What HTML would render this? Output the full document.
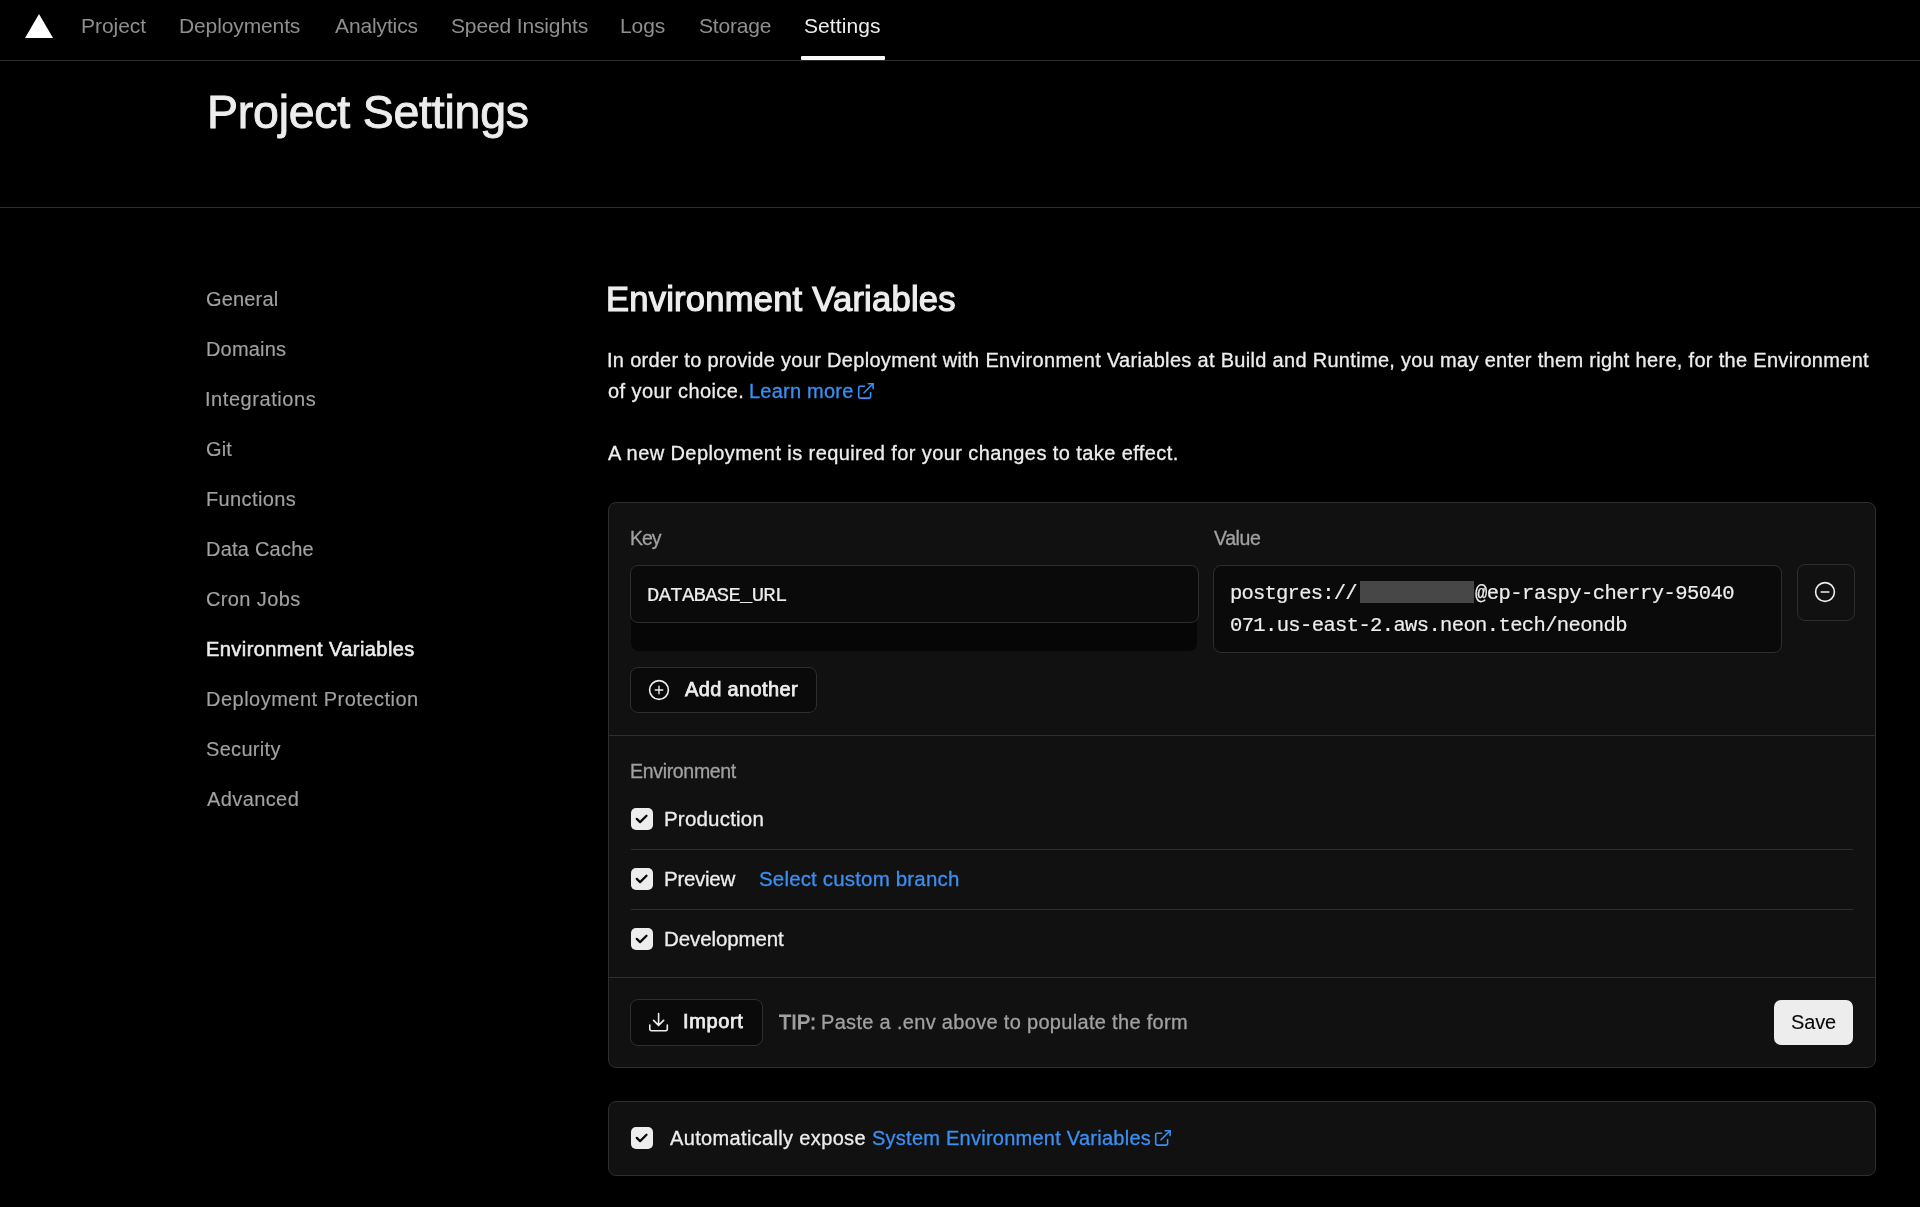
<!DOCTYPE html>
<html><head><meta charset="utf-8"><title>Project Settings</title>
<style>
html,body{margin:0;padding:0;background:#000;width:1920px;height:1207px;overflow:hidden;font-family:"Liberation Sans",sans-serif;}
.t{position:absolute;white-space:pre;will-change:transform;}
</style></head><body>
<svg style="position:absolute;left:25px;top:14px" width="28" height="24" viewBox="0 0 28 24"><path d="M14 0 L28 24 L0 24 Z" fill="#fff"/></svg>
<div class="t" style="left:81.30px;top:15.02px;font-size:21px;line-height:21px;color:#8f8f8f;font-family:'Liberation Sans',sans-serif;letter-spacing:-0.033px;">Project</div>
<div class="t" style="left:179.30px;top:15.02px;font-size:21px;line-height:21px;color:#8f8f8f;font-family:'Liberation Sans',sans-serif;letter-spacing:-0.120px;">Deployments</div>
<div class="t" style="left:335.00px;top:15.02px;font-size:21px;line-height:21px;color:#8f8f8f;font-family:'Liberation Sans',sans-serif;letter-spacing:-0.125px;">Analytics</div>
<div class="t" style="left:451.00px;top:15.02px;font-size:21px;line-height:21px;color:#8f8f8f;font-family:'Liberation Sans',sans-serif;letter-spacing:-0.138px;">Speed Insights</div>
<div class="t" style="left:620.00px;top:15.02px;font-size:21px;line-height:21px;color:#8f8f8f;font-family:'Liberation Sans',sans-serif;letter-spacing:-0.067px;">Logs</div>
<div class="t" style="left:699.00px;top:15.02px;font-size:21px;line-height:21px;color:#8f8f8f;font-family:'Liberation Sans',sans-serif;letter-spacing:-0.167px;">Storage</div>
<div class="t" style="left:804.40px;top:15.02px;font-size:21px;line-height:21px;color:#ededed;font-family:'Liberation Sans',sans-serif;letter-spacing:0.086px;">Settings</div>
<div style="position:absolute;left:0px;top:60px;width:1920px;height:1px;box-sizing:border-box;background:#2e2e2e"></div>
<div style="position:absolute;left:801px;top:56.4px;width:84px;height:3.4px;box-sizing:border-box;background:#fafafa;border-radius:1px"></div>
<div class="t" style="left:206.60px;top:88.54px;font-size:46.5px;line-height:46.5px;color:#ededed;font-family:'Liberation Sans',sans-serif;letter-spacing:-0.240px;-webkit-text-stroke:0.9px currentColor;">Project Settings</div>
<div style="position:absolute;left:0px;top:207px;width:1920px;height:1px;box-sizing:border-box;background:#2e2e2e"></div>
<div class="t" style="left:206.20px;top:289.37px;font-size:20px;line-height:20px;color:#a1a1a1;font-family:'Liberation Sans',sans-serif;letter-spacing:0.167px;-webkit-text-stroke:0.15px currentColor;">General</div>
<div class="t" style="left:206.20px;top:339.37px;font-size:20px;line-height:20px;color:#a1a1a1;font-family:'Liberation Sans',sans-serif;letter-spacing:0.167px;-webkit-text-stroke:0.15px currentColor;">Domains</div>
<div class="t" style="left:205.20px;top:389.37px;font-size:20px;line-height:20px;color:#a1a1a1;font-family:'Liberation Sans',sans-serif;letter-spacing:0.564px;-webkit-text-stroke:0.15px currentColor;">Integrations</div>
<div class="t" style="left:206.20px;top:439.37px;font-size:20px;line-height:20px;color:#a1a1a1;font-family:'Liberation Sans',sans-serif;letter-spacing:0.100px;-webkit-text-stroke:0.15px currentColor;">Git</div>
<div class="t" style="left:206.20px;top:489.37px;font-size:20px;line-height:20px;color:#a1a1a1;font-family:'Liberation Sans',sans-serif;letter-spacing:0.375px;-webkit-text-stroke:0.15px currentColor;">Functions</div>
<div class="t" style="left:206.20px;top:539.37px;font-size:20px;line-height:20px;color:#a1a1a1;font-family:'Liberation Sans',sans-serif;letter-spacing:0.222px;-webkit-text-stroke:0.15px currentColor;">Data Cache</div>
<div class="t" style="left:206.20px;top:589.37px;font-size:20px;line-height:20px;color:#a1a1a1;font-family:'Liberation Sans',sans-serif;letter-spacing:0.375px;-webkit-text-stroke:0.15px currentColor;">Cron Jobs</div>
<div class="t" style="left:206.20px;top:639.37px;font-size:20px;line-height:20px;color:#ededed;font-family:'Liberation Sans',sans-serif;letter-spacing:0.430px;-webkit-text-stroke:0.55px currentColor;">Environment Variables</div>
<div class="t" style="left:206.20px;top:689.37px;font-size:20px;line-height:20px;color:#a1a1a1;font-family:'Liberation Sans',sans-serif;letter-spacing:0.490px;-webkit-text-stroke:0.15px currentColor;">Deployment Protection</div>
<div class="t" style="left:206.20px;top:739.37px;font-size:20px;line-height:20px;color:#a1a1a1;font-family:'Liberation Sans',sans-serif;letter-spacing:0.314px;-webkit-text-stroke:0.15px currentColor;">Security</div>
<div class="t" style="left:207.20px;top:789.37px;font-size:20px;line-height:20px;color:#a1a1a1;font-family:'Liberation Sans',sans-serif;letter-spacing:0.400px;-webkit-text-stroke:0.15px currentColor;">Advanced</div>
<div class="t" style="left:605.90px;top:282.11px;font-size:34.6px;line-height:34.6px;color:#ededed;font-family:'Liberation Sans',sans-serif;letter-spacing:0.210px;-webkit-text-stroke:1.2px currentColor;">Environment Variables</div>
<div class="t" style="left:606.90px;top:349.57px;font-size:20px;line-height:20px;color:#ededed;font-family:'Liberation Sans',sans-serif;letter-spacing:0.309px;-webkit-text-stroke:0.3px currentColor;">In order to provide your Deployment with Environment Variables at Build and Runtime, you may enter them right here, for the Environment</div>
<div class="t" style="left:607.90px;top:381.17px;font-size:20px;line-height:20px;color:#ededed;font-family:'Liberation Sans',sans-serif;letter-spacing:0.414px;-webkit-text-stroke:0.3px currentColor;">of your choice.</div>
<div class="t" style="left:748.80px;top:381.17px;font-size:20px;line-height:20px;color:#3b8ff2;font-family:'Liberation Sans',sans-serif;letter-spacing:0.222px;-webkit-text-stroke:0.3px currentColor;">Learn more</div>
<svg style="position:absolute;left:856px;top:382px" width="19" height="18" viewBox="0 0 19 18" fill="none" stroke="#3b8ff2" stroke-width="1.6" stroke-linecap="round" stroke-linejoin="round"><path d="M8.5 4.2H4.2a1.5 1.5 0 0 0-1.5 1.5v8.9a1.5 1.5 0 0 0 1.5 1.5h8.9a1.5 1.5 0 0 0 1.5-1.5V10.5"/><path d="M12.3 1.8h4.8v4.8"/><path d="M8 10.8L17 1.8"/></svg>
<div class="t" style="left:607.90px;top:443.17px;font-size:20px;line-height:20px;color:#ededed;font-family:'Liberation Sans',sans-serif;letter-spacing:0.413px;-webkit-text-stroke:0.3px currentColor;">A new Deployment is required for your changes to take effect.</div>
<div style="position:absolute;left:608px;top:502px;width:1268px;height:566px;box-sizing:border-box;background:#111111;border:1px solid #2e2e2e;border-radius:8px"></div>
<div style="position:absolute;left:609px;top:735px;width:1266px;height:1px;box-sizing:border-box;background:#2e2e2e"></div>
<div style="position:absolute;left:609px;top:977px;width:1266px;height:1px;box-sizing:border-box;background:#2e2e2e"></div>
<div class="t" style="left:630.25px;top:528.99px;font-size:19.5px;line-height:19.5px;color:#a1a1a1;font-family:'Liberation Sans',sans-serif;letter-spacing:-1.000px;-webkit-text-stroke:0.3px currentColor;">Key</div>
<div class="t" style="left:1213.90px;top:528.99px;font-size:19.5px;line-height:19.5px;color:#a1a1a1;font-family:'Liberation Sans',sans-serif;letter-spacing:-0.400px;-webkit-text-stroke:0.3px currentColor;">Value</div>
<div style="position:absolute;left:631px;top:565px;width:566px;height:86px;box-sizing:border-box;background:#060606;border-radius:8px"></div>
<div style="position:absolute;left:630px;top:565px;width:569px;height:58px;box-sizing:border-box;background:#0a0a0a;border:1px solid #2e2e2e;border-radius:8px"></div>
<div class="t" style="left:646.80px;top:585.89px;font-size:20.5px;line-height:20.5px;color:#ededed;font-family:'Liberation Mono',monospace;letter-spacing:-0.673px;-webkit-text-stroke:0.2px currentColor;">DATABASE_URL</div>
<div style="position:absolute;left:1213px;top:565px;width:569px;height:88px;box-sizing:border-box;background:#0a0a0a;border:1px solid #2e2e2e;border-radius:8px"></div>
<div class="t" style="left:1230.20px;top:584.19px;font-size:20.5px;line-height:20.5px;color:#ededed;font-family:'Liberation Mono',monospace;letter-spacing:-0.780px;-webkit-text-stroke:0.2px currentColor;">postgres://</div>
<div style="position:absolute;left:1360px;top:581px;width:114px;height:22px;box-sizing:border-box;background:#474747"></div>
<div class="t" style="left:1474.50px;top:584.19px;font-size:20.5px;line-height:20.5px;color:#ededed;font-family:'Liberation Mono',monospace;letter-spacing:-0.524px;-webkit-text-stroke:0.2px currentColor;">@ep-raspy-cherry-95040</div>
<div class="t" style="left:1230.20px;top:615.99px;font-size:20.5px;line-height:20.5px;color:#ededed;font-family:'Liberation Mono',monospace;letter-spacing:-0.630px;-webkit-text-stroke:0.2px currentColor;">071.us-east-2.aws.neon.tech/neondb</div>
<div style="position:absolute;left:1796.5px;top:563.5px;width:58px;height:57.5px;box-sizing:border-box;background:#111111;border:1px solid #2e2e2e;border-radius:8px"></div>
<svg style="position:absolute;left:1813.2px;top:579.8px" width="24" height="24" viewBox="0 0 24 24" fill="none" stroke="#ededed" stroke-linecap="round"><circle cx="12" cy="12" r="9.4" stroke-width="1.6"/><path d="M8.2 12h7.6" stroke-width="1.6"/></svg>
<div style="position:absolute;left:630px;top:667px;width:187px;height:46px;box-sizing:border-box;background:#0a0a0a;border:1px solid #2e2e2e;border-radius:8px"></div>
<svg style="position:absolute;left:646.6px;top:678.3px" width="24" height="24" viewBox="0 0 24 24" fill="none" stroke="#ededed" stroke-linecap="round"><circle cx="12" cy="12" r="9.4" stroke-width="1.6"/><path d="M8.2 12h7.6M12 8.2v7.6" stroke-width="1.4"/></svg>
<div class="t" style="left:684.75px;top:679.17px;font-size:20px;line-height:20px;color:#ededed;font-family:'Liberation Sans',sans-serif;letter-spacing:0.360px;-webkit-text-stroke:0.75px currentColor;">Add another</div>
<div class="t" style="left:630.25px;top:761.74px;font-size:19.5px;line-height:19.5px;color:#a1a1a1;font-family:'Liberation Sans',sans-serif;letter-spacing:-0.320px;-webkit-text-stroke:0.3px currentColor;">Environment</div>
<div style="position:absolute;left:631px;top:808px;width:22px;height:22px;background:#ededed;border-radius:5px"></div><svg style="position:absolute;left:631px;top:808px" width="22" height="22" viewBox="0 0 22 22" fill="none" stroke="#0a0a0a" stroke-width="2.3" stroke-linecap="round" stroke-linejoin="round"><path d="M5.8 10.9L9.1 14.1L15.5 7.7"/></svg>
<div class="t" style="left:663.80px;top:809.05px;font-size:20.5px;line-height:20.5px;color:#ededed;font-family:'Liberation Sans',sans-serif;letter-spacing:0.200px;-webkit-text-stroke:0.3px currentColor;">Production</div>
<div style="position:absolute;left:631px;top:849px;width:1222px;height:1px;box-sizing:border-box;background:#2e2e2e"></div>
<div style="position:absolute;left:631px;top:868px;width:22px;height:22px;background:#ededed;border-radius:5px"></div><svg style="position:absolute;left:631px;top:868px" width="22" height="22" viewBox="0 0 22 22" fill="none" stroke="#0a0a0a" stroke-width="2.3" stroke-linecap="round" stroke-linejoin="round"><path d="M5.8 10.9L9.1 14.1L15.5 7.7"/></svg>
<div class="t" style="left:663.70px;top:869.15px;font-size:20.5px;line-height:20.5px;color:#ededed;font-family:'Liberation Sans',sans-serif;letter-spacing:-0.267px;-webkit-text-stroke:0.3px currentColor;">Preview</div>
<div class="t" style="left:759.00px;top:869.15px;font-size:20.5px;line-height:20.5px;color:#3b8ff2;font-family:'Liberation Sans',sans-serif;letter-spacing:0.168px;-webkit-text-stroke:0.3px currentColor;">Select custom branch</div>
<div style="position:absolute;left:631px;top:909px;width:1222px;height:1px;box-sizing:border-box;background:#2e2e2e"></div>
<div style="position:absolute;left:631px;top:928px;width:22px;height:22px;background:#ededed;border-radius:5px"></div><svg style="position:absolute;left:631px;top:928px" width="22" height="22" viewBox="0 0 22 22" fill="none" stroke="#0a0a0a" stroke-width="2.3" stroke-linecap="round" stroke-linejoin="round"><path d="M5.8 10.9L9.1 14.1L15.5 7.7"/></svg>
<div class="t" style="left:663.70px;top:928.65px;font-size:20.5px;line-height:20.5px;color:#ededed;font-family:'Liberation Sans',sans-serif;letter-spacing:-0.100px;-webkit-text-stroke:0.3px currentColor;">Development</div>
<div style="position:absolute;left:630px;top:999px;width:133px;height:47px;box-sizing:border-box;background:#0a0a0a;border:1px solid #2e2e2e;border-radius:8px"></div>
<svg style="position:absolute;left:646px;top:1011px" width="24" height="24" viewBox="0 0 24 24" fill="none" stroke="#ededed" stroke-width="1.6" stroke-linecap="round" stroke-linejoin="round"><path d="M12.6 2.6v12M7.6 9.4l5 5 5-5"/><path d="M3.8 14v4.2a1.5 1.5 0 0 0 1.5 1.5h14.5a1.5 1.5 0 0 0 1.5-1.5V14"/></svg>
<div class="t" style="left:683.10px;top:1010.97px;font-size:20px;line-height:20px;color:#ededed;font-family:'Liberation Sans',sans-serif;letter-spacing:0.640px;-webkit-text-stroke:0.75px currentColor;">Import</div>
<div class="t" style="left:779.00px;top:1011.77px;font-size:20px;line-height:20px;color:#a1a1a1;font-family:'Liberation Sans',sans-serif;letter-spacing:0.067px;-webkit-text-stroke:0.9px currentColor;">TIP:</div>
<div class="t" style="left:821.00px;top:1011.77px;font-size:20px;line-height:20px;color:#a1a1a1;font-family:'Liberation Sans',sans-serif;letter-spacing:0.316px;-webkit-text-stroke:0.3px currentColor;">Paste a .env above to populate the form</div>
<div style="position:absolute;left:1774px;top:1000px;width:79px;height:45px;box-sizing:border-box;background:#ededed;border-radius:7px"></div>
<div class="t" style="left:1790.80px;top:1011.77px;font-size:20px;line-height:20px;color:#0a0a0a;font-family:'Liberation Sans',sans-serif;letter-spacing:-0.133px;-webkit-text-stroke:0.12px currentColor;">Save</div>
<div style="position:absolute;left:608px;top:1101px;width:1268px;height:75px;box-sizing:border-box;background:#111111;border:1px solid #2e2e2e;border-radius:8px"></div>
<div style="position:absolute;left:631px;top:1127px;width:22px;height:22px;background:#ededed;border-radius:5px"></div><svg style="position:absolute;left:631px;top:1127px" width="22" height="22" viewBox="0 0 22 22" fill="none" stroke="#0a0a0a" stroke-width="2.3" stroke-linecap="round" stroke-linejoin="round"><path d="M5.8 10.9L9.1 14.1L15.5 7.7"/></svg>
<div class="t" style="left:669.60px;top:1127.67px;font-size:20px;line-height:20px;color:#ededed;font-family:'Liberation Sans',sans-serif;letter-spacing:0.347px;-webkit-text-stroke:0.3px currentColor;">Automatically expose</div>
<div class="t" style="left:871.50px;top:1127.67px;font-size:20px;line-height:20px;color:#3b8ff2;font-family:'Liberation Sans',sans-serif;letter-spacing:0.252px;-webkit-text-stroke:0.3px currentColor;">System Environment Variables</div>
<svg style="position:absolute;left:1153.4px;top:1129.4px" width="19" height="18" viewBox="0 0 19 18" fill="none" stroke="#3b8ff2" stroke-width="1.6" stroke-linecap="round" stroke-linejoin="round"><path d="M8.5 4.2H4.2a1.5 1.5 0 0 0-1.5 1.5v8.9a1.5 1.5 0 0 0 1.5 1.5h8.9a1.5 1.5 0 0 0 1.5-1.5V10.5"/><path d="M12.3 1.8h4.8v4.8"/><path d="M8 10.8L17 1.8"/></svg>
</body></html>
